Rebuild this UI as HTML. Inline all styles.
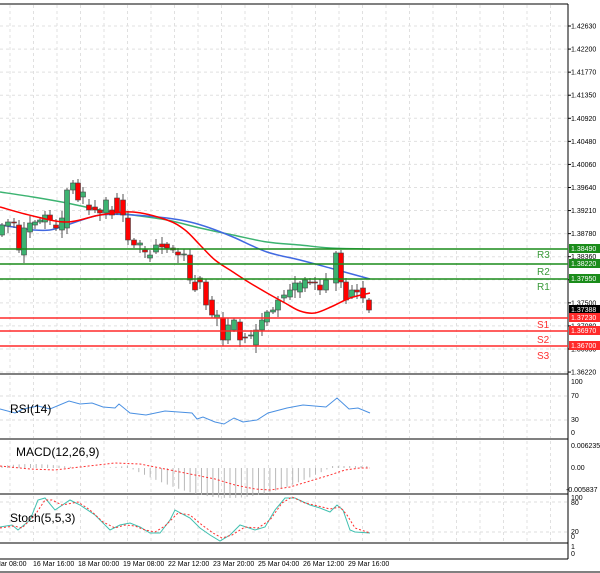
<!DOCTYPE html>
<html><head><meta charset="utf-8"><style>
body{margin:0;background:#fff;}
svg{display:block;font-family:"Liberation Sans",sans-serif;}
</style></head><body>
<svg id="s" width="600" height="573" viewBox="0 0 600 573" xmlns="http://www.w3.org/2000/svg">
<rect width="600" height="573" fill="#fff"/>
<g id="grid" stroke="#e0e0e0" stroke-width="1" stroke-dasharray="3,3"></g>
<g stroke="#808080" stroke-width="2" fill="none">
<line x1="0" y1="4" x2="568" y2="4"/>
<line x1="0" y1="374" x2="568" y2="374"/>
<line x1="0" y1="439" x2="568" y2="439"/>
<line x1="0" y1="494" x2="568" y2="494"/>
<line x1="0" y1="543" x2="568" y2="543"/>
<line x1="0" y1="559" x2="568" y2="559"/>
<line x1="0" y1="572" x2="600" y2="572"/>
</g>
<line x1="568" y1="4" x2="568" y2="559" stroke="#000" stroke-width="1"/>
<path id="ma1" fill="none" stroke="#3cb371" stroke-width="1.5"/>
<path id="ma2" fill="none" stroke="#4169e1" stroke-width="1.5"/>
<g id="candles"></g>
<path id="ma3" fill="none" stroke="#ff0000" stroke-width="1.5"/>
<g stroke-width="1.5">
<line x1="0" y1="249" x2="568" y2="249" stroke="#1a8c1a"/>
<line x1="0" y1="264" x2="568" y2="264" stroke="#1a8c1a"/>
<line x1="0" y1="279" x2="568" y2="279" stroke="#1a8c1a"/>
<line x1="0" y1="318" x2="568" y2="318" stroke="#ff2a2a"/>
<line x1="0" y1="331" x2="568" y2="331" stroke="#ff2a2a"/>
<line x1="0" y1="346" x2="568" y2="346" stroke="#ff2a2a"/>
</g>
<g font-size="10">
<text x="537" y="258" fill="#3a9a3a">R3</text>
<text x="537" y="275" fill="#3a9a3a">R2</text>
<text x="537" y="290" fill="#3a9a3a">R1</text>
<text x="537" y="328" fill="#ff3030">S1</text>
<text x="537" y="343" fill="#ff3030">S2</text>
<text x="537" y="359" fill="#ff3030">S3</text>
</g>
<g id="axis" font-size="7" fill="#000"></g>
<g font-size="7">
<rect x="569" y="244" width="31" height="9" fill="#1a8c1a"/><text x="571" y="251" fill="#fff">1.38490</text>
<rect x="569" y="259" width="31" height="9" fill="#1a8c1a"/><text x="571" y="266" fill="#fff">1.38220</text>
<rect x="569" y="274" width="31" height="9" fill="#1a8c1a"/><text x="571" y="281" fill="#fff">1.37950</text>
<rect x="569" y="305" width="31" height="9" fill="#000"/><text x="571" y="312" fill="#fff">1.37388</text>
<rect x="569" y="313" width="31" height="9" fill="#ff2a2a"/><text x="571" y="320" fill="#fff">1.37230</text>
<rect x="569" y="326" width="31" height="9" fill="#ff2a2a"/><text x="571" y="333" fill="#fff">1.36970</text>
<rect x="569" y="341" width="31" height="9" fill="#ff2a2a"/><text x="571" y="348" fill="#fff">1.36700</text>
</g>
<g stroke="#ddd" stroke-dasharray="3,3"><line x1="0" y1="396" x2="568" y2="396"/><line x1="0" y1="420" x2="568" y2="420"/></g>
<polyline fill="none" stroke="#4a90e2" stroke-width="1" points="0,409 15,413 23,409 38,406 50,409 69,401 80,404 92,403 103,407 115,408 119,404 130,413 146,415 165,411 192,413 197,419 203,417 215,422 224,424 234,418 243,422 257,420 268,413 287,408 303,405 326,407 337,398 349,409 358,408 370,413"/>
<text x="10" y="413" font-size="12">RSI(14)</text>
<g font-size="7"><text x="571" y="384">100</text><text x="571" y="398">70</text><text x="571" y="422">30</text><text x="571" y="435">0</text></g>
<g id="hist" stroke="#b8b8b8" stroke-width="1"></g>
<polyline fill="none" stroke="#ff3030" stroke-width="1" stroke-dasharray="2,2" points="0,466 30,469 55,470 80,467 115,463 140,464 160,468 190,474 215,479 235,485 255,489 270,490 290,487 310,481 330,475 345,470 360,468 370,468"/>
<text x="16" y="456" font-size="12">MACD(12,26,9)</text>
<g font-size="7"><text x="571" y="448">0.006235</text><text x="571" y="470">0.00</text><text x="566" y="492">-0.005837</text></g>
<g stroke="#ddd" stroke-dasharray="3,3"><line x1="0" y1="502" x2="568" y2="502"/><line x1="0" y1="532" x2="568" y2="532"/></g>
<polyline fill="none" stroke="#40c0b0" stroke-width="1" points="0,527 12,525 18,530 30,520 38,500 45,498 55,510 70,500 80,505 95,515 110,530 120,525 130,523 140,527 150,533 160,533 170,520 175,510 190,518 200,528 210,535 220,541 230,535 240,525 255,530 265,527 275,510 285,498 295,498 310,505 320,508 330,512 337,505 343,510 350,530 355,532 370,533"/>
<polyline fill="none" stroke="#ff3030" stroke-width="1" stroke-dasharray="2,2" points="0,528 14,526 22,528 35,515 45,500 52,500 62,505 78,502 90,510 103,522 115,528 125,525 135,526 145,530 155,532 165,526 178,513 190,515 202,525 213,533 222,538 232,535 245,527 258,528 270,520 282,503 292,497 305,503 318,506 330,509 340,507 347,515 355,528 370,533"/>
<text x="10" y="522" font-size="12">Stoch(5,5,3)</text>
<g font-size="7"><text x="571" y="500">100</text><text x="571" y="505">80</text><text x="571" y="534">20</text><text x="571" y="539">0</text>
<text x="571" y="549">1</text><text x="571" y="556">0</text></g>
<g font-size="7"><text x="-5" y="566">Mar 08:00</text><text x="33" y="566">16 Mar 16:00</text><text x="78" y="566">18 Mar 00:00</text><text x="123" y="566">19 Mar 08:00</text><text x="168" y="566">22 Mar 12:00</text><text x="213" y="566">23 Mar 20:00</text><text x="258" y="566">25 Mar 04:00</text><text x="303" y="566">26 Mar 12:00</text><text x="348" y="566">29 Mar 16:00</text></g>
</svg>
<script>
var N="http://www.w3.org/2000/svg";
function el(p,t,a){var e=document.createElementNS(N,t);for(var k in a)e.setAttribute(k,a[k]);p.appendChild(e);return e;}
function smooth(id,P){var d="M"+P[0][0]+","+P[0][1];for(var i=0;i<P.length-1;i++){var p0=P[Math.max(i-1,0)],p1=P[i],p2=P[i+1],p3=P[Math.min(i+2,P.length-1)];
 d+=" C"+(p1[0]+(p2[0]-p0[0])/6)+","+(p1[1]+(p2[1]-p0[1])/6)+" "+(p2[0]-(p3[0]-p1[0])/6)+","+(p2[1]-(p3[1]-p1[1])/6)+" "+p2[0]+","+p2[1];}
 document.getElementById(id).setAttribute('d',d);}
smooth('ma1',[[0,192],[33,197],[67,203],[100,210],[133,215],[167,220],[200,228],[233,235],[267,242],[300,245],[330,248],[370,249]]);
smooth('ma2',[[0,225],[20,228],[33,230],[50,230],[67,225],[100,215],[133,215],[167,218],[190,222],[210,228],[233,237],[267,252],[300,260],[330,268],[370,279]]);
smooth('ma3',[[0,207],[33,216],[67,222],[100,215],[133,212],[167,220],[185,230],[200,245],[215,260],[233,272],[250,283],[267,293],[285,303],[300,311],[315,313],[333,306],[350,298],[370,293]]);
var g=document.getElementById('grid');
for(var x=10;x<568;x+=23.5){el(g,'line',{x1:x,y1:5,x2:x,y2:373});el(g,'line',{x1:x,y1:376,x2:x,y2:438});el(g,'line',{x1:x,y1:441,x2:x,y2:493});el(g,'line',{x1:x,y1:496,x2:x,y2:542});}
var labs=["1.42630","1.42200","1.41770","1.41350","1.40920","1.40480","1.40060","1.39640","1.39210","1.38780","1.38360","1.37930","1.37500","1.37080","1.36650","1.36220"];
var ax=document.getElementById('axis');
for(var i=0;i<labs.length;i++){var y=26+i*23.07;el(g,'line',{x1:0,y1:y,x2:568,y2:y});
 if(i!=11){var t=el(ax,'text',{x:571,y:y+2.5});t.textContent=labs[i];} el(ax,'line',{x1:568,y1:y,x2:571,y2:y,stroke:'#000'});}
var C=[[2,235,225],[8,226,222],[14,222,223],[19,225,250],[24,255,228],[30,232,223],[35,225,222],[40,222,220],[45,222,215],[50,215,220],[56,225,228],[62,230,218],[67,228,190],[73,190,183],[78,183,200],[83,197,192],[89,205,210],[95,207,210],[100,210,213],[106,213,200],[112,210,215],[117,198,213],[123,200,215],[128,218,240],[134,240,245],[140,245,243],[145,250,252],[150,258,255],[156,252,245],[162,244,247],[167,244,248],[173,248,250],[178,252,255],[184,255,254],[190,255,280],[195,282,290],[200,278,282],[206,282,305],[212,300,315],[217,318,315],[223,318,340],[228,340,325],[234,330,320],[240,322,340],[245,337,338],[251,336,335],[256,345,330],[262,330,320],[267,322,312],[273,312,310],[278,310,300],[284,298,295],[290,297,290],[295,290,283],[300,292,283],[305,288,280],[310,282,283],[315,282,283],[320,285,290],[326,290,280],[336,283,253],[341,253,282],[346,282,300],[352,297,290],[357,290,292],[363,288,298],[369,300,310]];
var cg=document.getElementById('candles');
C.forEach(function(c,i){var x=c[0],o=c[1],cl=c[2],t=Math.min(o,cl),b=Math.max(o,cl);var hi=t-2-(i*7%6),lo=b+2+(i*5%7);
 el(cg,'line',{x1:x,y1:hi,x2:x,y2:lo,stroke:'#555','stroke-width':1});
 el(cg,'rect',{x:x-2.5,y:t,width:5,height:Math.max(b-t,1),fill:cl<o?'#3cb371':'#ff0000',stroke:'#444','stroke-width':0.6});});
var h=document.getElementById('hist');
for(var x=2;x<372;x+=5.7){var v;if(x<130)v=2+Math.sin(x/20)*2;else if(x<330)v=-Math.sin((x-130)/200*Math.PI)*30;else v=2;el(h,'line',{x1:x,y1:468,x2:x,y2:468-v});}
</script>
</body></html>
